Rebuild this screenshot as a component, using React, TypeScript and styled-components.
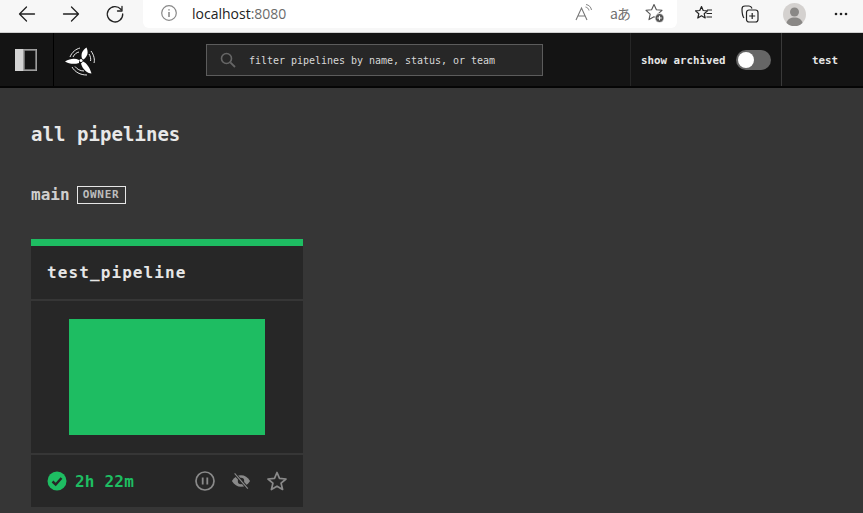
import React from "react";
import styled, { createGlobalStyle } from "styled-components";

const mono = `"DejaVu Sans Mono", "Liberation Mono", monospace`;
const green = "#1ebd62";

const Global = createGlobalStyle`
  html, body { margin: 0; padding: 0; height: 100%; background: #363636; overflow: hidden; }
  #root { height: 100%; }
  * { box-sizing: border-box; }
`;

const Page = styled.div`
  width: 863px;
  height: 513px;
  display: flex;
  flex-direction: column;
  overflow: hidden;
  background: #363636;
`;

const BrowserBar = styled.div`
  height: 33px;
  flex: none;
  display: flex;
  align-items: flex-start;
  background: #f7f7f7;
  border-bottom: 1px solid #cfcfcf;
`;

const NavGroup = styled.div`
  width: 143px;
  height: 28px;
  flex: none;
  display: flex;
  align-items: center;
  padding-left: 17px;
  gap: 24px;
`;

const AddressBar = styled.div`
  width: 534px;
  height: 28px;
  flex: none;
  display: flex;
  align-items: center;
  background: #fff;
  border-radius: 0 0 6px 6px;
  padding: 0 12px 2px 18px;
  font: 14px "Open Sans", "Liberation Sans", sans-serif;
  color: #222;
`;

const Url = styled.span`
  margin-left: 15px;
  flex: 1;
  b { font-weight: 400; color: #6b6b6b; }
`;

const AddressTools = styled.div`
  display: flex;
  align-items: center;
  gap: 17px;
`;

const TranslateGlyph = styled.span`
  width: 18px;
  font: 14px "Noto Sans CJK JP", "Noto Sans", sans-serif;
  letter-spacing: -1px;
  white-space: nowrap;
  color: #707070;
`;

const BrowserTools = styled.div`
  flex: 1;
  height: 28px;
  display: flex;
  align-items: center;
  padding-left: 18px;
`;

const ToolSlot = styled.div<{ $gap: number }>`
  display: flex;
  flex: none;
  margin-right: ${(p) => p.$gap}px;
`;

const Header = styled.header`
  height: 55px;
  flex: none;
  display: flex;
  align-items: stretch;
  background: #141414;
  border-bottom: 2px solid #050505;
`;

const SidebarCell = styled.div`
  width: 54px;
  flex: none;
  display: flex;
  align-items: center;
  padding-left: 15px;
  border-right: 1px solid #000;
`;

const LogoCell = styled.div`
  width: 152px;
  flex: none;
  display: flex;
  align-items: center;
  padding-left: 10px;
`;

const SearchBox = styled.div`
  width: 337px;
  height: 32px;
  flex: none;
  align-self: center;
  display: flex;
  align-items: center;
  gap: 13px;
  padding-left: 13px;
  background: #272727;
  border: 1px solid #5c5c5c;
  font: 10px ${mono};
  color: #d8d8d8;
`;

const SearchText = styled.span`
  padding-top: 2px;
  letter-spacing: -0.02px;
`;

const Spacer = styled.div`
  width: 87px;
  flex: none;
`;

const ArchivedCell = styled.div`
  width: 152px;
  flex: none;
  display: flex;
  align-items: center;
  padding: 1px 0 0 10px;
  gap: 10px;
  border-left: 1px solid #262626;
  border-right: 1px solid #3a3a3a;
  font: 700 10.8px ${mono};
  color: #e6e6e6;
`;

const Toggle = styled.div`
  width: 35px;
  height: 20px;
  flex: none;
  margin-top: -1px;
  border-radius: 10px;
  background: #666;
  padding: 2px;
`;

const Knob = styled.div`
  width: 16px;
  height: 16px;
  border-radius: 50%;
  background: #fff;
`;

const UserCell = styled.div`
  flex: 1;
  display: flex;
  align-items: center;
  padding: 1px 0 0 30px;
  font: 700 10.8px ${mono};
  color: #e6e6e6;
`;

const Main = styled.main`
  flex: 1;
  padding: 33px 0 0 31px;
`;

const Title = styled.h1`
  margin: 0;
  height: 27px;
  font: 700 19px/27px ${mono};
  letter-spacing: 0.05px;
  color: #e8e8e8;
`;

const GroupRow = styled.div`
  margin-top: 36px;
  display: flex;
  align-items: center;
  gap: 7px;
  height: 22px;
`;

const GroupName = styled.h2`
  margin: 0;
  font: 700 16px/22px ${mono};
  color: #cfcfcf;
`;

const Badge = styled.span`
  width: 49px;
  height: 18px;
  display: flex;
  align-items: center;
  justify-content: center;
  padding-bottom: 1px;
  border: 1px solid #e6e6e6;
  font: 700 11px ${mono};
  letter-spacing: 0.7px;
  color: #bdbdbd;
`;

const Card = styled.article`
  margin-top: 33px;
  width: 272px;
  background: #272727;
  border-top: 7px solid ${green};
`;

const CardHeader = styled.div`
  height: 53px;
  display: flex;
  align-items: center;
  padding-left: 16px;
  font: 700 16px ${mono};
  letter-spacing: 1.1px;
  color: #e6e6e6;
`;

const CardBody = styled.div`
  height: 156px;
  padding-top: 18px;
  display: flex;
  justify-content: center;
  border-top: 2px solid #363636;
  border-bottom: 2px solid #363636;
`;

const StatusBlock = styled.div<{ $color: string }>`
  width: 196px;
  height: 116px;
  background: ${(p) => p.$color};
`;

const CardFooter = styled.div`
  height: 52px;
  display: flex;
  align-items: center;
  padding: 0 16px;
`;

const Duration = styled.span`
  margin-left: 8px;
  flex: 1;
  font: 700 16px ${mono};
  letter-spacing: 0.2px;
  color: ${green};
`;

const Actions = styled.div`
  display: flex;
  align-items: center;
  gap: 16px;
`;

const Stroke = { fill: "none", stroke: "#222", strokeWidth: 1.3, strokeLinecap: "round", strokeLinejoin: "round" } as const;

const Logo = () => (
  <svg width="32" height="32" viewBox="4 4 32 32">
    <g fill="#fff">
      <circle cx="21" cy="20.500" r="1.600" />
      <path d="M22 18.500 C20.500 14 22.500 10 26.500 7.500 C28.500 12 28 16 23.500 19.500 Z" />
      <path d="M19 20 C15 18 10 18.500 5 21.500 C9 24 14 24.500 19 23 Z" />
      <path d="M23 21.500 C26.500 23 29.500 27 31.500 33.500 C27 33.500 22.500 29 21 23.500 Z" />
    </g>
    <g fill="none" stroke="#fff" strokeWidth="0.900">
      <path d="M10 17 C12 12 16 9 20 8" />
      <path d="M13 17 C14.500 14 16.500 12.500 19 12" />
      <path d="M31 11 C34 15 35 20 34 23" />
      <path d="M29 14 C30.500 16 31 19 30.500 21" />
      <path d="M12 27 C15 32 20 35 27 35" />
      <path d="M15 26.500 C17 29 20 31 24 31" />
    </g>
  </svg>
);

export default function App() {
  return (
    <Page>
      <Global />
      <BrowserBar>
        <NavGroup>
          <svg width="20" height="20" viewBox="0 0 20 20"><path {...Stroke} d="M2.500 10h15M9.500 3l-7 7 7 7" /></svg>
          <svg width="20" height="20" viewBox="0 0 20 20"><path {...Stroke} d="M2.500 10h15M10.500 3l7 7-7 7" /></svg>
          <svg width="20" height="20" viewBox="0 0 20 20"><path {...Stroke} d="M17 2.500V7h-4.500M15.800 5.200A7.700 7.700 0 1 0 17.700 10" /></svg>
        </NavGroup>
        <AddressBar>
          <svg width="16" height="16" viewBox="0 0 16 16">
            <circle cx="8" cy="8" r="7.300" fill="none" stroke="#888" strokeWidth="1.200" />
            <path d="M8 7v5M8 4.200v1.300" stroke="#666" strokeWidth="1.200" />
          </svg>
          <Url>localhost<b>:8080</b></Url>
          <AddressTools>
            <svg width="18" height="18" viewBox="0 0 18 18">
              <path d="M1 16 6.500 4 12 16M3 12h7" fill="none" stroke="#777" strokeWidth="1.100" />
              <path d="M10.500 3c2 .5 3 1.500 3.500 3.500M11 .5c3 .5 5 2.500 5.500 5.500" fill="none" stroke="#777" strokeWidth="0.900" />
            </svg>
            <TranslateGlyph>aあ</TranslateGlyph>
            <svg width="20" height="20" viewBox="0 0 20 20">
              <path d="M9 1.500l2.400 5.200 5.600.6-4.200 3.800 1.200 5.500-5-2.900-5 2.900 1.200-5.500L1 7.300l5.600-.6Z" fill="none" stroke="#555" strokeWidth="1.100" strokeLinejoin="round" />
              <circle cx="14.500" cy="15" r="4.500" fill="#555" stroke="#fff" strokeWidth="0.800" />
              <path d="M14.500 12.800v4.400M12.300 15h4.400" stroke="#fff" strokeWidth="1.100" />
            </svg>
          </AddressTools>
        </AddressBar>
        <BrowserTools>
          <ToolSlot $gap={28}>
            <svg width="18" height="18" viewBox="0 0 18 18">
              <path d="M6.500 1.500l1.700 4 4.300.4-3.300 2.900 1 4.200-3.700-2.200-3.700 2.200 1-4.200L.5 5.900l4.300-.4Z" fill="none" stroke="#222" strokeWidth="1.200" strokeLinejoin="round" />
              <path d="M12 5h5M11.500 8.500h5.500M11.500 12h5.500" stroke="#222" strokeWidth="1.200" />
            </svg>
          </ToolSlot>
          <ToolSlot $gap={23}>
            <svg width="19" height="20" viewBox="0 0 19 20">
              <path d="M3 14C1.500 12 1 8 1 5c0-2 1-3 3-3h4c1.500 0 2.500 1 3 2.500" fill="none" stroke="#222" strokeWidth="1.200" />
              <rect x="5.500" y="6" width="11.500" height="12" rx="2.500" fill="none" stroke="#222" strokeWidth="1.200" />
              <path d="M11.200 9v6M8.200 12h6" stroke="#222" strokeWidth="1.200" />
            </svg>
          </ToolSlot>
          <ToolSlot $gap={28}>
            <svg width="23" height="23" viewBox="0 0 23 23">
              <circle cx="11.500" cy="11.500" r="11.500" fill="#d4d1cf" />
              <circle cx="11.500" cy="9" r="4.500" fill="#8a8886" />
              <path d="M3.500 20c1-4 4-5.500 8-5.500s7 1.500 8 5.500a11.500 11.500 0 0 1-16 0Z" fill="#8a8886" />
            </svg>
          </ToolSlot>
          <svg width="14" height="4" viewBox="0 0 14 4">
            <circle cx="2" cy="2" r="1.300" fill="#222" />
            <circle cx="7" cy="2" r="1.300" fill="#222" />
            <circle cx="12" cy="2" r="1.300" fill="#222" />
          </svg>
        </BrowserTools>
      </BrowserBar>
      <Header>
        <SidebarCell>
          <svg width="22" height="22" viewBox="0 0 22 22">
            <rect width="22" height="22" fill="#d4d4d4" />
            <rect x="9" y="1" width="12" height="20" fill="#141414" stroke="#8a8a8a" strokeWidth="1.500" />
          </svg>
        </SidebarCell>
        <LogoCell><Logo /></LogoCell>
        <SearchBox>
          <svg width="16" height="16" viewBox="0 0 16 16">
            <circle cx="6.500" cy="6.500" r="5" fill="none" stroke="#666" strokeWidth="1.600" />
            <path d="M10.300 10.300 15 15" stroke="#666" strokeWidth="1.800" />
          </svg>
          <SearchText>filter pipelines by name, status, or team</SearchText>
        </SearchBox>
        <Spacer />
        <ArchivedCell>
          show archived
          <Toggle><Knob /></Toggle>
        </ArchivedCell>
        <UserCell>test</UserCell>
      </Header>
      <Main>
        <Title>all pipelines</Title>
        <GroupRow>
          <GroupName>main</GroupName>
          <Badge>OWNER</Badge>
        </GroupRow>
        <Card>
          <CardHeader>test_pipeline</CardHeader>
          <CardBody><StatusBlock $color={green} /></CardBody>
          <CardFooter>
            <svg width="20" height="20" viewBox="0 0 20 20">
              <circle cx="10" cy="10" r="9.500" fill={green} />
              <path d="M5.500 10.500 8.700 13.500 14.500 7" fill="none" stroke="#272727" strokeWidth="2.400" />
            </svg>
            <Duration>2h 22m</Duration>
            <Actions>
              <svg width="20" height="20" viewBox="0 0 20 20">
                <circle cx="10" cy="10" r="9" fill="none" stroke="#8a8a8a" strokeWidth="1.700" />
                <path d="M7.700 6.500v7M12.300 6.500v7" stroke="#8a8a8a" strokeWidth="1.800" />
              </svg>
              <svg width="20" height="20" viewBox="0 0 22 20">
                <path d="M1 10c2.500-4.300 6-6.300 10-6.300S18.500 5.700 21 10c-2.500 4.300-6 6.300-10 6.300S3.500 14.300 1 10Z" fill="#8a8a8a" />
                <circle cx="11" cy="10" r="3.500" fill="#272727" />
                <path d="M4 2 18.500 18" stroke="#272727" strokeWidth="3.200" />
                <path d="M4 1.500 18.500 18.500" stroke="#8a8a8a" strokeWidth="1.200" />
              </svg>
              <svg width="20" height="20" viewBox="0 0 20 20">
                <path d="M10 1.500l2.500 5.900 6.500.6-4.900 4.200 1.500 6.300L10 15.200l-5.600 3.300 1.500-6.300L1 8l6.500-.6Z" fill="none" stroke="#8a8a8a" strokeWidth="1.700" strokeLinejoin="round" />
              </svg>
            </Actions>
          </CardFooter>
        </Card>
      </Main>
    </Page>
  );
}
